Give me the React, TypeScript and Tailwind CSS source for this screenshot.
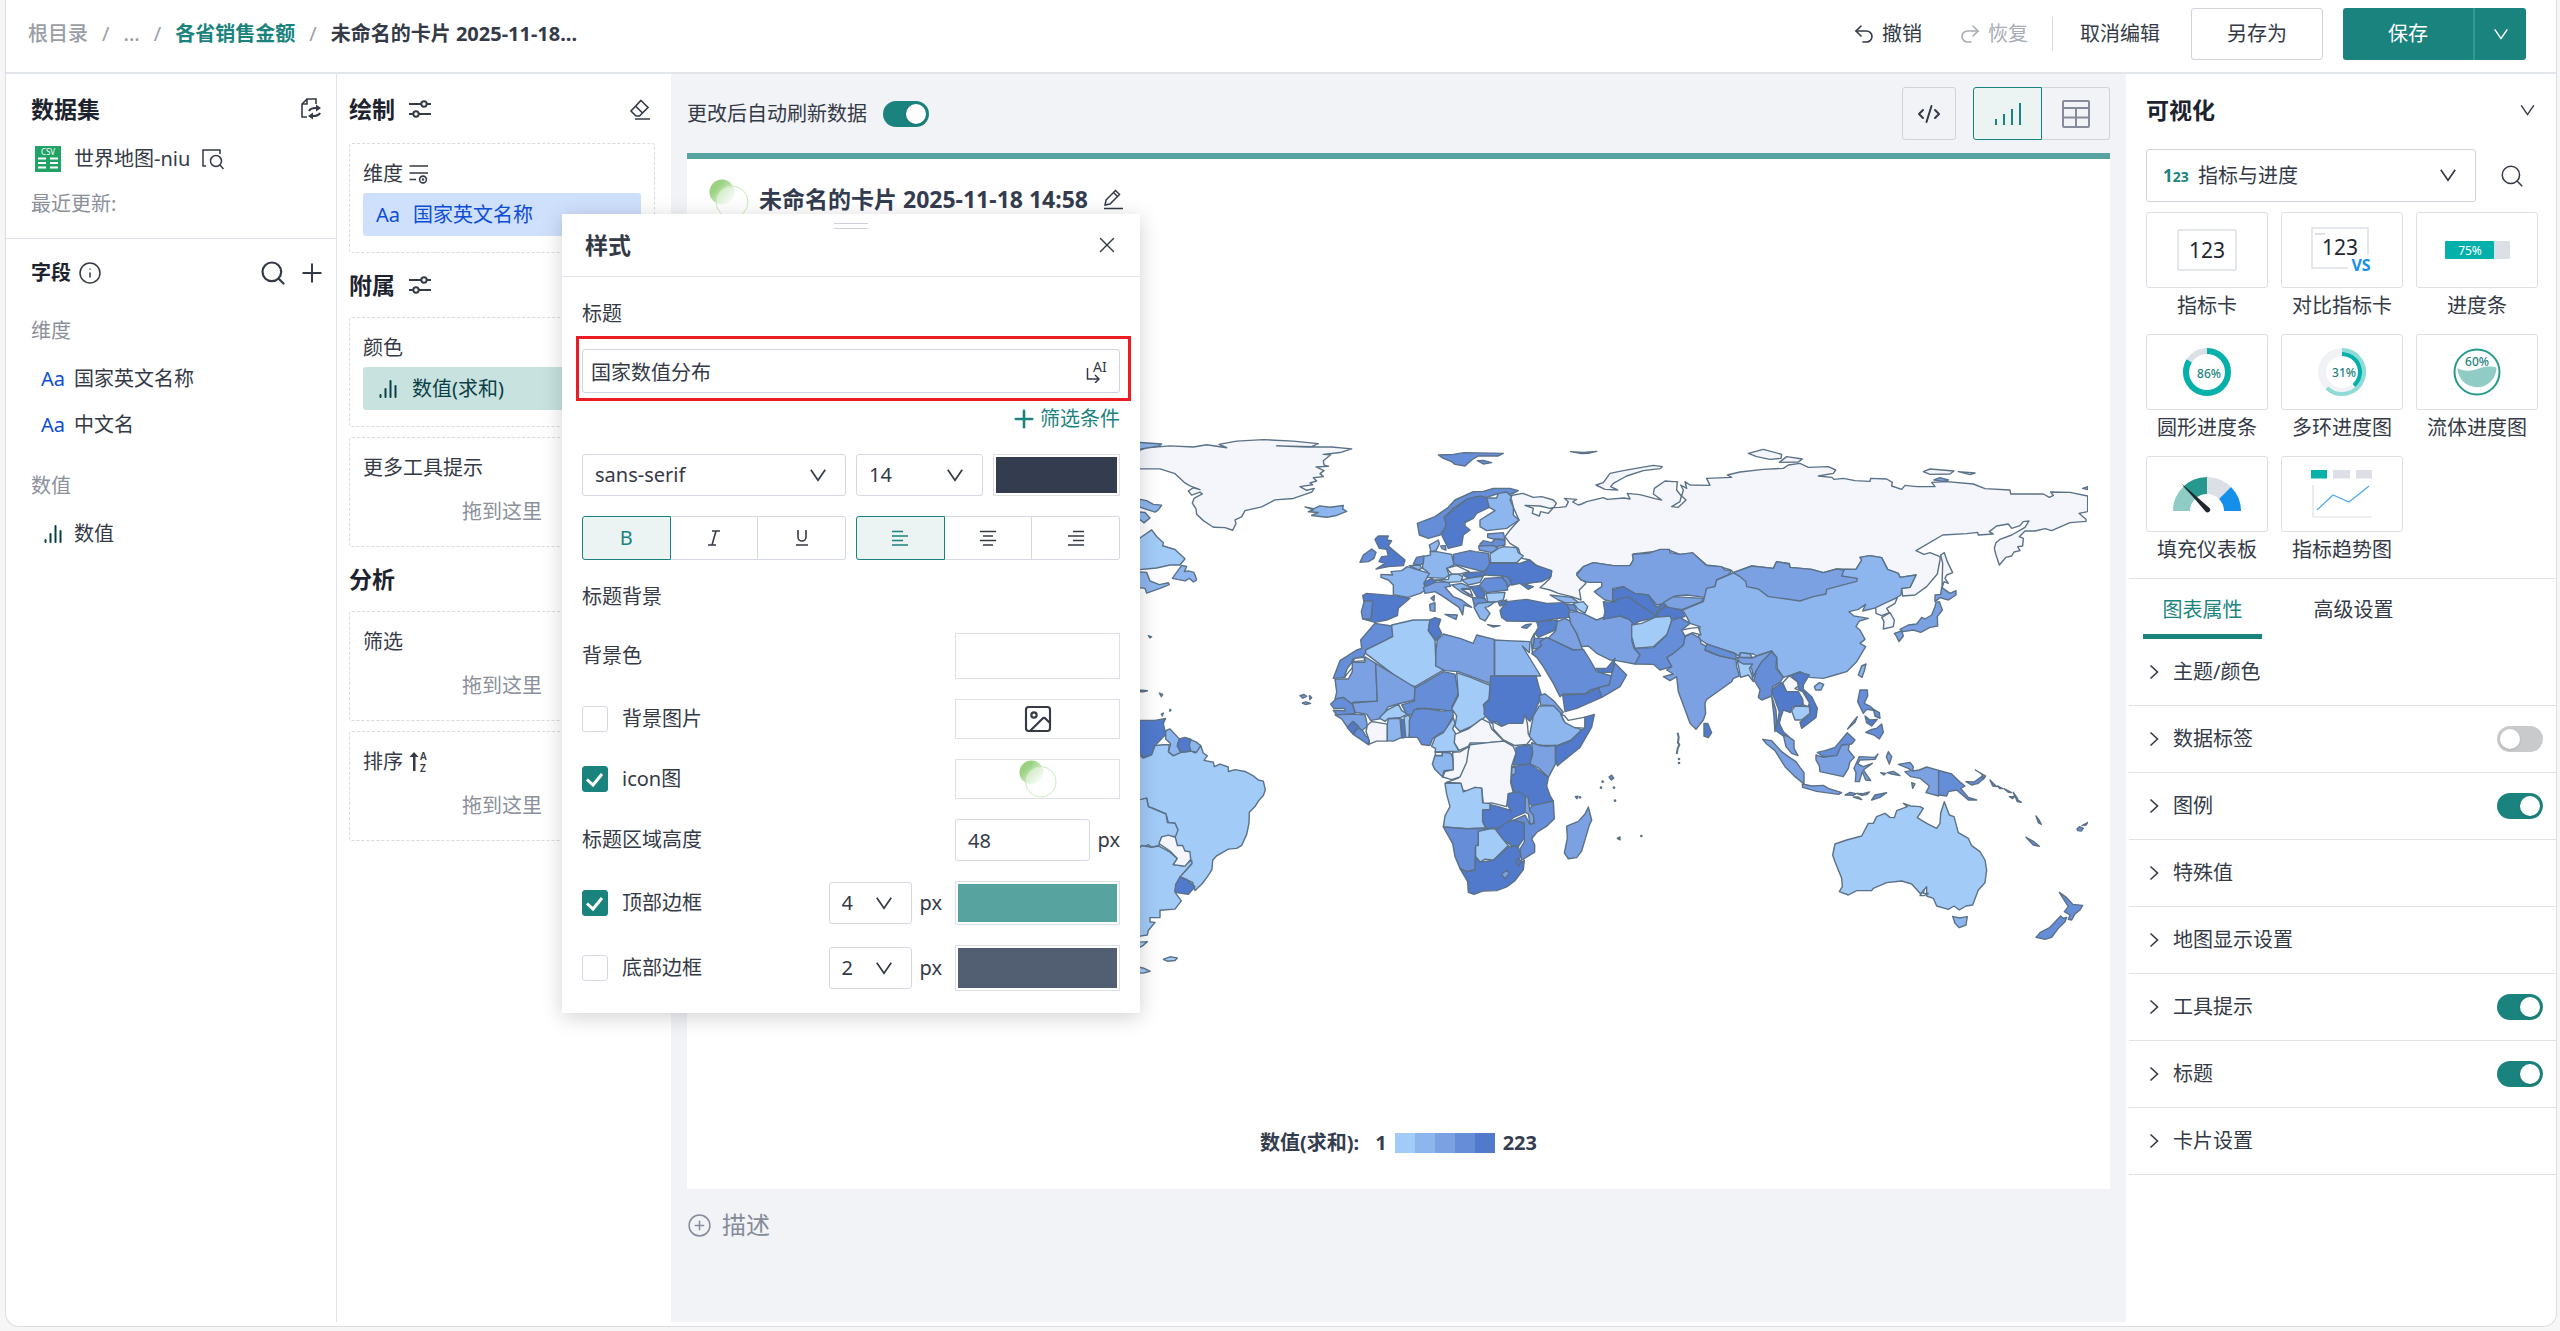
import React, { useState } from 'react';
import { CirclePlus, CodeXml, Image, Info, Plus, Redo2, Search, Undo2, X } from 'lucide-react';

type Region = [string, string];

const C1 = '#a2cbf8';
const C2 = '#8eb6ee';
const C3 = '#7ba1e2';
const C4 = '#668dd8';
const C5 = '#517acd';
const NONE = '#f4f6fb';
const WHITE = '#ffffff';

const atlantic: Region[] = [
  [NONE, '50,85 80,75 150,70 220,73 260,67 320,75 297,66 350,57 430,53 520,57 595,64 575,72 470,70 560,73 635,73 695,78 660,88 610,93 632,94 610,110 612,122 625,125 588,127 612,137 600,145 610,153 580,156 590,165 570,170 578,175 540,180 560,190 583,185 575,195 520,212 465,216 425,235 375,245 365,262 345,270 348,280 338,298 315,291 280,290 250,272 230,255 228,240 217,225 222,212 247,200 240,195 215,203 205,192 220,183 240,188 210,178 195,170 165,145 120,132 50,132'],
  [C2, '50,60 125,65 118,70 50,80'],
  [C2, '555,235 580,240 600,232 630,236 670,231 668,240 680,247 650,258 620,263 575,258 595,250 565,248 580,243'],
  [C2, '50,213 80,218 100,228 125,230 115,243 105,249 50,233'],
  [C2, '50,248 75,250 90,265 80,272 72,278 50,262'],
  [C1, '50,325 95,297 110,315 130,332 128,340 165,350 195,375 180,392 150,392 110,400 50,405'],
  [C2, '50,410 80,412 90,435 118,445 145,440 148,445 120,455 80,468 75,455 50,452'],
  [C2, '157,428 185,393 200,396 193,410 205,408 222,412 230,432 220,438 208,428 195,435'],
  [C5, '50,812 105,812 137,807 130,820 137,850 105,880 95,905 70,912 50,890'],
  [C2, '137,840 150,835 178,862 172,880 182,900 160,908 145,897 152,875 137,862'],
  [C1, '50,900 70,914 95,905 105,880 130,878 148,878 145,897 160,908 185,898 215,895 225,900 242,880 250,900 262,908 252,920 280,925 283,937 300,930 325,938 325,950 345,945 375,950 400,962 415,973 430,976 436,1000 430,1015 415,1030 405,1045 388,1060 387,1090 380,1120 365,1150 350,1158 325,1160 290,1178 278,1190 276,1215 262,1235 245,1255 225,1272 218,1250 180,1235 215,1200 205,1170 190,1163 170,1150 165,1125 172,1105 165,1090 145,1088 138,1065 100,1050 85,1045 80,1022 50,1030'],
  [C5, '178,862 195,858 212,863 208,880 213,895 185,898 172,882'],
  [C2, '212,864 228,870 242,880 230,898 213,895 208,880'],
  [C1, '50,1028 80,1022 85,1045 138,1065 142,1088 165,1090 174,1108 167,1125 125,1127 117,1150 95,1155 85,1148 50,1165'],
  [C1, '50,1165 65,1150 95,1155 117,1152 150,1168 172,1185 160,1202 190,1206 215,1190 216,1198 180,1235 165,1270 168,1280 184,1300 165,1322 120,1325 120,1345 90,1345 90,1357 105,1358 85,1380 82,1392 60,1395 50,1410'],
  [NONE, '117,1145 125,1127 145,1122 166,1128 172,1150 188,1150 195,1165 210,1167 212,1188 195,1206 160,1202 172,1185 150,1165'],
  [C5, '180,1235 200,1242 225,1262 205,1282 165,1277 167,1255'],
  [C1, '50,1412 82,1410 70,1420 50,1430'],
  [C1, '130,1458 150,1451 172,1454 165,1461 142,1463'],
  [C1, '50,1478 72,1482 90,1490 70,1495 50,1494'],
  [C4, '50,729 82,732 70,735 50,735'],
  [C3, '118,738 128,742 124,748'],
  [C3, '124,795 130,792 127,800'],
  [C3, '85,583 95,586 90,589'],
  [C3, '150,782 153,785 149,787'],
  [C3, '540,745 552,742 560,747 549,752'],
  [C3, '568,745 575,750 570,756'],
  [C3, '547,765 558,762 572,766 556,769'],
];

const africa: Region[] = [
  [C3, '645,700 685,700 697,680 697,655 735,655 735,640 767,658 772,760 700,763 695,770 670,750 645,755 650,735'],
  [C3, '767,658 885,723 883,757 845,765 805,775 795,790 780,808 752,812 740,795 705,790 697,765 772,760'],
  [C4, '632,768 650,753 670,750 697,768 705,793 650,797 640,785 675,786 675,780 642,780'],
  [C3, '645,797 705,795 735,797 740,815 742,828 725,840 715,828 700,815 682,830 665,808'],
  [C5, '682,832 698,815 714,828 700,850'],
  [C4, '700,850 714,832 730,842 738,855 748,862 746,878 720,862'],
  [NONE, '748,867 738,842 742,825 755,815 775,818 802,822 802,868 770,868 748,876'],
  [C1, '778,805 800,785 835,768 845,785 862,795 840,805 805,807 795,815'],
  [C2, '802,822 805,808 840,806 845,858 820,868 802,867'],
  [C5, '843,808 855,812 856,858 846,860'],
  [C1, '852,803 866,797 874,812 867,858 857,858'],
  [C4, '885,725 970,680 1005,687 1015,740 995,775 1000,790 965,783 915,780 890,780 875,798 860,795 845,770 883,760'],
  [C4, '868,858 868,812 882,783 915,780 965,787 997,785 1000,800 975,840 955,850 937,862 930,880 905,877 892,858'],
  [C1, '1010,683 1055,697 1110,717 1107,755 1090,770 1098,800 1075,820 1020,842 1005,828 1010,800 995,780 1015,745'],
  [C5, '1112,692 1248,692 1258,725 1265,745 1253,770 1240,800 1230,815 1215,800 1213,820 1165,822 1145,828 1130,815 1115,820 1092,795 1095,765 1108,757'],
  [C1, '935,882 945,858 970,845 1000,805 1005,820 998,835 1010,852 1003,872 1017,895 945,897 947,888'],
  [NONE, '1005,850 1045,835 1085,808 1108,818 1115,835 1152,868 1105,872 1050,873 1045,882 1017,893 1003,872'],
  [NONE, '1118,815 1145,828 1165,820 1208,820 1215,795 1222,820 1225,850 1237,858 1220,877 1185,880 1150,865 1120,835'],
  [C3, '1258,745 1275,740 1300,758 1330,790 1322,796 1300,772 1262,770'],
  [C2, '1240,800 1258,773 1300,772 1325,795 1330,812 1385,838 1355,865 1310,880 1270,880 1250,878 1228,855'],
  [WHITE, '1322,795 1334,800 1345,812 1395,803 1395,833 1365,832 1335,818'],
  [C5, '1395,803 1423,796 1415,830 1380,885 1325,925 1312,935 1306,915 1308,882 1350,868 1385,838 1395,833'],
  [C3, '1235,872 1260,880 1280,882 1306,880 1306,930 1285,966 1255,940 1228,928 1238,905'],
  [C5, '1188,885 1230,877 1238,895 1230,930 1180,933 1188,905'],
  [C5, '1178,937 1230,930 1285,966 1280,990 1290,1015 1300,1030 1235,1043 1210,1018 1180,1003 1172,970'],
  [C2, '1175,940 1186,938 1186,955 1175,962'],
  [NONE, '1050,878 1105,872 1152,868 1180,882 1188,900 1175,935 1172,980 1180,1008 1165,1010 1160,1045 1115,1035 1090,1038 1085,995 1065,993 1045,1005 1028,1000 1020,982 978,980 1015,968 1035,920'],
  [NONE, '998,898 1020,897 1047,882 1040,925 1020,965 995,972 968,965 975,950 1000,945'],
  [WHITE, '946,898 967,898 967,907 946,907'],
  [C2, '937,930 945,907 967,908 967,898 992,900 998,912 1000,945 972,948 968,965 945,945'],
  [C1, '975,982 1023,982 1030,1005 1065,993 1085,995 1088,1035 1110,1037 1110,1053 1088,1054 1088,1085 1097,1103 1040,1105 970,1100 975,1070 990,1045 980,1012'],
  [C5, '1088,1055 1110,1053 1112,1040 1135,1045 1165,1053 1175,1060 1162,1040 1165,1010 1200,1005 1220,1020 1222,1058 1180,1075 1140,1105 1100,1105 1088,1085'],
  [C3, '1216,1018 1225,1020 1228,1050 1243,1070 1240,1092 1230,1092 1225,1065 1215,1060'],
  [C4, '1235,1043 1300,1030 1303,1078 1280,1098 1250,1115 1235,1132 1244,1148 1244,1168 1205,1190 1200,1160 1213,1140 1213,1090 1180,1082 1215,1068 1230,1093 1243,1090 1240,1068 1228,1055'],
  [C5, '1128,1108 1160,1088 1180,1082 1213,1090 1212,1130 1195,1153 1175,1150 1150,1135'],
  [C4, '970,1100 1040,1105 1140,1103 1075,1112 1075,1150 1066,1155 1065,1215 1040,1221 1020,1212 1005,1180 998,1145'],
  [C1, '1075,1112 1110,1105 1125,1105 1148,1132 1165,1150 1120,1190 1095,1187 1080,1195 1067,1180 1067,1150 1075,1150'],
  [C5, '1020,1213 1040,1221 1065,1217 1067,1182 1080,1195 1120,1190 1168,1152 1195,1153 1202,1182 1190,1190 1195,1203 1213,1190 1210,1215 1185,1245 1160,1262 1130,1272 1090,1273 1062,1282 1045,1277 1043,1248'],
  [C3, '1145,1228 1160,1217 1168,1225 1155,1240'],
  [C5, '1187,1195 1195,1185 1204,1193 1196,1205'],
  [C3, '1405,1046 1415,1082 1408,1095 1385,1165 1370,1183 1345,1186 1333,1170 1342,1130 1340,1098 1375,1085 1395,1065'],
  [C4, '1467,965 1475,960 1481,968 1474,973'],
  [C4, '1366,1018 1374,1017 1371,1024'],
  [C4, '1492,1131 1500,1127 1500,1135'],
];

const eurasia: Region[] = [
  [NONE, '565,228 608,220 640,232 665,230 700,240 709,250 702,262 690,265 660,258 615,256 640,265 637,280 658,288 662,275 685,280 700,263 718,262 738,260 745,245 733,235 770,238 758,246 775,255 785,252 800,245 850,233 862,238 912,234 930,237 922,220 960,224 1005,236 1025,240 1000,222 1003,205 1035,183 1060,185 1072,185 1070,210 1084,228 1080,245 1055,260 1075,262 1098,240 1085,228 1090,210 1082,195 1100,205 1095,185 1110,195 1170,196 1160,175 1235,172 1222,165 1260,156 1330,148 1390,145 1405,135 1440,130 1465,142 1525,140 1547,150 1540,160 1495,168 1535,172 1542,178 1570,175 1605,182 1650,184 1652,175 1700,177 1717,187 1715,198 1745,208 1755,196 1790,200 1845,200 1835,187 1880,185 1960,192 1995,206 2070,210 2072,222 2170,222 2188,232 2200,226 2192,216 2250,217 2303,228 2303,275 2277,280 2298,298 2298,304 2250,308 2195,332 2175,326 2145,333 2115,333 2098,350 2110,355 2108,378 2093,380 2100,392 2082,396 2075,408 2058,412 2038,435 2028,405 2023,385 2028,368 2040,358 2075,345 2115,322 2127,303 2110,305 2100,317 2075,325 2065,312 2030,318 2008,335 2020,342 1975,345 1973,337 1940,341 1868,345 1788,392 1812,403 1830,398 1860,410 1860,420 1852,462 1820,500 1785,525 1748,528 1745,505 1770,502 1788,465 1740,472 1735,460 1703,448 1685,413 1650,407 1620,412 1625,420 1608,448 1550,447 1510,458 1475,448 1410,442 1408,430 1370,425 1360,445 1295,438 1240,458 1232,450 1200,440 1160,435 1118,400 1080,403 1045,390 940,402 940,420 930,437 880,437 820,428 790,440 770,460 785,475 798,490 778,510 783,540 755,530 715,520 690,510 660,503 675,490 690,475 695,455 660,445 630,420 605,415 600,400 595,385 570,370 555,350 570,330 597,300 580,262 575,240'],
  [NONE, '828,195 850,188 870,160 910,152 1000,136 1027,140 1020,146 970,152 920,168 880,190 872,200 893,210 855,208'],
  [C4, '752,95 790,97 830,94 805,100 785,101'],
  [C4, '355,105 400,103 432,98 550,100 535,108 475,108 455,120 435,138 405,133 395,125 370,115'],
  [C4, '472,122 490,121 515,128 490,132'],
  [NONE, '1285,100 1330,88 1385,103 1383,115 1350,118 1310,110'],
  [NONE, '1378,127 1400,110 1447,117 1435,126'],
  [NONE, '1810,155 1830,147 1902,153 1890,162 1830,163'],
  [NONE, '1915,155 1965,159 1950,164'],
  [C3, '1842,180 1860,173 1885,180 1870,184'],
  [C3, '2288,205 2303,200 2303,209'],
  [NONE, '1862,405 1873,398 1882,425 1898,458 1880,465 1875,475 1885,490 1872,485 1866,505 1868,430'],
  [C3, '790,440 820,428 880,437 930,437 940,420 937,403 985,400 1020,388 1048,388 1050,398 1080,403 1118,398 1160,437 1205,440 1215,450 1235,452 1225,465 1190,480 1185,500 1160,505 1155,532 1100,525 1065,528 1045,548 1010,555 985,525 940,520 910,500 878,505 878,545 855,540 835,525 823,515 845,500 845,487 805,487 783,480 770,465'],
  [C2, '1240,458 1225,465 1190,480 1185,500 1160,505 1150,545 1088,570 1100,590 1110,610 1140,620 1135,655 1165,675 1240,698 1255,708 1262,698 1300,702 1310,708 1355,693 1370,712 1372,745 1390,772 1415,765 1440,755 1470,772 1510,775 1545,765 1580,755 1610,725 1637,680 1620,670 1635,658 1620,630 1608,620 1618,603 1645,595 1615,590 1602,588 1587,575 1615,568 1637,553 1628,573 1670,563 1710,545 1743,525 1745,505 1770,502 1788,465 1740,472 1735,460 1703,448 1685,413 1650,407 1620,412 1625,420 1608,448 1575,448 1500,480 1400,500 1300,480'],
  [C3, '1240,458 1295,438 1360,445 1370,425 1408,432 1410,442 1475,448 1510,458 1550,447 1572,450 1565,468 1612,475 1610,484 1550,500 1520,508 1518,522 1480,530 1440,543 1400,537 1345,530 1315,507 1280,500 1278,485 1260,470'],
  [C3, '1095,650 1115,640 1140,655 1143,670 1160,680 1155,690 1190,705 1248,718 1250,740 1258,768 1240,775 1235,785 1200,810 1160,838 1155,850 1157,880 1150,900 1128,928 1110,910 1090,855 1075,815 1070,770 1050,782 1030,770 1060,762 1040,750 1055,740 1040,712 1060,700 1090,675'],
  [C5, '1152,910 1163,910 1175,938 1165,953 1152,948'],
  [C4, '1160,672 1200,685 1248,702 1248,718 1200,708 1155,690'],
  [C2, '1258,712 1262,698 1290,702 1297,712'],
  [C3, '1250,712 1297,714 1310,708 1355,693 1358,705 1325,730 1310,750 1300,770 1295,745 1262,732'],
  [C1, '1252,722 1270,732 1298,732 1288,745 1296,765 1300,785 1285,765 1262,772'],
  [C4, '1310,750 1325,725 1355,695 1370,712 1368,745 1390,772 1380,787 1358,800 1355,828 1325,840 1315,832 1320,810 1302,780'],
  [C4, '1355,828 1368,870 1370,905 1365,935 1362,890'],
  [C4, '292,310 345,290 385,262 405,240 460,215 490,214 520,205 570,205 595,212 575,222 530,222 500,232 470,230 440,238 400,265 375,290 378,320 360,345 325,355 298,345'],
  [C5, '470,230 485,228 507,240 508,262 470,280 460,295 435,308 435,318 450,330 430,345 425,375 385,385 365,345 375,325 378,310 372,292 400,270 440,238'],
  [C2, '500,234 530,234 535,220 560,216 575,230 570,240 580,262 580,285 597,300 560,325 500,332 480,320 480,300 525,272 508,262'],
  [C2, '328,375 355,360 358,372 348,392 333,395'],
  [C3, '362,378 376,377 378,390 366,386'],
  [C3, '503,342 550,338 555,358 520,357 503,352'],
  [C4, '480,372 490,362 515,368 525,357 555,360 555,375 530,380 480,378'],
  [C3, '476,378 520,376 535,385 515,398 478,390'],
  [C1, '510,402 535,385 550,380 590,383 595,398 610,408 590,428 512,428'],
  [C4, '400,403 450,392 465,395 505,400 510,440 490,455 400,432'],
  [C2, '308,410 332,405 330,395 350,395 395,403 402,435 380,445 387,465 375,475 320,472 322,455 308,445'],
  [C4, '280,432 290,412 312,408 310,430 300,435'],
  [C2, '268,437 300,435 305,445 295,450'],
  [C2, '183,463 218,465 213,455 245,452 262,440 328,460 318,478 312,492 318,510 300,520 265,532 220,524 220,495 205,480 183,472'],
  [C5, '312,487 335,475 348,485 335,495 315,497'],
  [C3, '310,502 345,487 385,485 392,498 375,502 400,530 425,540 455,562 432,555 428,585 417,562 370,530 345,515 315,520'],
  [C1, '345,480 385,478 388,465 410,460 428,470 422,485 385,487'],
  [NONE, '380,445 410,437 448,455 420,462 395,462'],
  [C5, '428,465 445,458 490,455 497,465 445,475'],
  [C2, '425,480 445,475 490,468 480,487 445,495'],
  [C5, '510,430 560,430 600,430 628,420 645,435 695,452 693,470 665,485 640,488 612,492 640,500 625,508 600,490 575,495 570,475 545,468 497,465 495,455'],
  [C4, '545,468 562,470 575,490 565,500'],
  [C4, '478,497 495,475 545,472 560,488 563,510 500,518'],
  [C1, '498,520 555,517 550,540 520,548 503,545'],
  [C5, '452,500 475,497 495,520 492,535 470,530'],
  [C2, '395,495 425,490 460,505 425,505 455,532 430,520'],
  [NONE, '425,508 450,508 458,528'],
  [C4, '457,532 495,535 500,548 475,552 465,565'],
  [C2, '462,562 475,550 525,545 505,560 495,562 510,580 495,603 480,595'],
  [C4, '503,614 520,617 540,617 520,621'],
  [C4, '605,622 618,614 634,612 620,625'],
  [C3, '375,583 412,585 408,598'],
  [C3, '329,553 345,548 345,574 331,572'],
  [C3, '333,535 343,527 342,543'],
  [C5, '128,527 140,520 220,527 270,535 235,565 232,587 200,600 165,607 130,597 155,590 157,545 132,545'],
  [C4, '133,543 158,543 153,597 128,597 124,575'],
  [C5, '165,358 175,348 205,348 200,360 215,362 205,378 225,395 255,420 250,437 205,440 168,447 195,430 177,425 185,410 205,408 200,388 178,385'],
  [C4, '120,427 130,405 155,387 168,397 162,415 145,425'],
  [C5, '540,572 560,545 620,538 680,550 735,548 750,570 745,592 700,597 655,605 560,603 545,592'],
  [C5, '535,548 560,540 560,550 540,558'],
  [C2, '690,525 755,532 775,547 735,548 715,540'],
  [C1, '760,550 790,545 803,560 795,580 775,568'],
  [C4, '740,552 762,555 772,575 750,570'],
  [C5, '650,605 712,600 705,630 655,652 645,640 655,622'],
  [C3, '712,605 735,595 752,605 770,640 788,690 760,690 685,655 707,632'],
  [C4, '643,655 680,655 665,665 670,673 650,687 637,685'],
  [C3, '633,660 643,640 643,655 637,695'],
  [C4, '635,700 665,677 660,665 680,652 760,690 790,688 810,720 830,755 875,768 868,795 810,810 795,822 730,822 720,830 700,790 670,740 650,712'],
  [C3, '745,577 770,575 795,583 830,600 855,590 900,588 935,600 940,630 935,660 942,685 960,705 945,732 890,722 870,720 830,700 805,678 785,680 770,640 752,610'],
  [C5, '828,745 860,745 885,715 878,757 838,757'],
  [C4, '885,730 920,765 900,800 845,832 835,803 868,795 875,762'],
  [C5, '728,825 795,822 835,803 845,832 770,865 735,875'],
  [C5, '850,545 880,548 900,532 925,530 960,555 1015,590 955,605 945,615 925,597 900,588 850,598 855,575'],
  [C5, '878,510 910,500 945,520 985,525 1010,562 1035,548 1035,560 1012,572 1015,592 960,555 925,530 900,535 880,545'],
  [C3, '1030,548 1060,530 1150,535 1145,545 1088,568 1050,568'],
  [C5, '1010,580 1035,560 1085,570 1095,590 1060,597 1015,590'],
  [C1, '935,615 965,610 1005,592 1050,588 1055,600 1045,640 1000,680 945,685 935,650'],
  [C4, '945,685 1000,683 1040,645 1055,602 1080,592 1110,610 1085,630 1095,650 1090,675 1060,700 1040,712 1055,740 1020,750 1000,733 945,732 960,705'],
  [WHITE, '1085,630 1110,625 1135,622 1143,645 1118,638 1095,648'],
  [C4, '165,610 215,618 220,648 185,668 140,690 130,710 100,715 75,772 40,775 60,722 110,690 125,685 122,660'],
  [WHITE, '72,773 82,745 100,722 105,715 133,712 133,722 98,725 98,742'],
  [C1, '215,615 280,600 330,600 325,632 345,660 348,735 370,750 285,800 255,790 137,700 137,690 218,650'],
  [C5, '330,600 345,593 362,598 355,620 365,640 348,662 325,632'],
  [C3, '352,660 370,642 420,655 460,670 470,645 523,658 523,790 510,790 415,755 375,752 347,738 348,690'],
  [C2, '524,660 560,662 630,665 628,698 607,678 662,768 524,768'],
];

const pacific: Region[] = [
  [C5, '160,85 185,68 200,95 235,93 248,115 248,135 215,142 212,158 190,150 183,170 178,190 190,215 207,230 190,228 165,210 172,190 178,155 165,120 155,95'],
  [C5, '215,45 240,37 268,45 250,75 250,88 275,110 292,145 288,172 245,205 240,187 270,165 270,140 255,100 235,85 235,70 225,60'],
  [NONE, '188,68 208,47 232,65 235,78 225,86 248,95 268,128 265,140 250,135 248,118 235,95 200,95'],
  [C1, '215,152 225,138 268,140 270,160 245,180 225,180'],
  [C3, '190,225 205,230 222,242 222,265 234,287 215,280 198,260'],
  [C3, '128,238 155,242 185,275 205,290 228,305 240,322 252,338 252,372 225,350 195,320 165,272 140,252'],
  [C3, '247,372 275,378 310,376 325,385 365,398 355,403 290,394 248,382'],
  [C3, '288,285 310,292 350,285 358,255 388,252 385,270 403,292 390,305 385,325 370,350 300,335 298,318 288,300'],
  [C4, '292,277 315,272 345,262 382,218 405,240 395,252 365,255 350,287 310,290'],
  [C3, '418,290 465,292 474,282 465,298 420,300 413,312 430,320 457,310 430,330 452,362 437,360 427,335 418,365 406,365 408,338 402,325'],
  [C3, '505,275 515,290 508,312 499,290'],
  [C3, '482,338 498,340 492,345'],
  [C3, '502,338 520,334 540,347 515,342'],
  [C3, '575,368 585,372 578,385'],
  [C4, '455,420 465,405 500,398 480,412'],
  [C4, '375,405 390,397 408,401 400,406'],
  [C4, '410,400 430,401 448,396 440,404 425,406'],
  [C4, '400,411 415,411 425,419'],
  [C3, '535,313 570,307 580,320 578,333 598,330 620,321 656,331 656,408 618,398 628,378 600,355 572,350 555,335 575,332 565,325'],
  [C4, '656,331 695,342 722,368 735,378 722,385 745,412 770,420 745,420 710,390 685,395 680,408 656,405'],
  [C4, '738,365 762,366 785,350 792,355 775,370 755,375'],
  [C4, '766,330 797,348 790,357 785,342'],
  [C4, '810,360 830,380 818,378'],
  [C4, '832,378 848,386 840,386'],
  [C4, '852,386 875,398 865,397'],
  [C4, '880,397 893,416 885,412'],
  [C4, '868,410 882,410 878,416'],
  [C4, '888,416 904,427 892,425'],
  [C4, '948,468 956,478 964,493 955,488'],
  [C4, '918,532 940,544 958,559 940,555'],
  [C4, '1071,507 1078,500 1090,505 1084,513 1073,512'],
  [C4, '1086,497 1104,487 1098,495'],
  [C1, '345,552 380,540 425,528 445,490 460,490 470,470 495,460 510,472 523,473 530,452 562,440 550,430 572,438 600,440 610,445 592,473 620,490 650,505 660,490 662,460 673,425 688,465 702,470 715,518 745,535 755,557 780,575 795,600 800,630 795,668 775,690 758,735 738,738 718,750 702,738 685,748 650,738 640,715 620,708 620,680 602,702 575,672 545,663 500,668 460,685 455,692 410,692 385,705 358,695 367,680 365,655 345,605 338,585'],
  [WHITE, '600,707 612,690 610,700 625,700 612,707'],
  [C2, '698,769 718,774 742,770 738,795 718,803 705,790'],
  [C4, '1018,697 1040,713 1058,733 1088,736 1080,750 1065,762 1055,780 1045,778 1050,765 1033,755 1045,740'],
  [C4, '1022,768 1030,775 1040,772 1035,785 1015,805 995,832 975,838 948,832 960,818 990,802'],
  [C4, '420,90 442,90 443,108 433,130 452,140 465,152 440,148 430,160 420,140 413,125'],
  [C4, '460,148 478,158 480,175 465,168'],
  [C5, '435,168 450,180 472,178 455,198 440,188'],
  [C4, '437,217 455,208 470,205 485,192 490,217 478,237 462,225'],
  [C4, '412,170 405,187 383,207 395,190'],
  [C2, '415,45 425,18 438,12 433,32 426,52'],
  [C2, '283,80 298,68 311,73 303,90 287,90'],
];

const japan: Region[] = [
  [C3, '725,472 750,490 768,482 768,495 745,510 720,503 705,515 705,495 722,493'],
  [C3, '708,517 718,515 727,540 712,560 713,588 690,592 662,607 640,600 610,605 600,598 625,585 650,582 665,562 675,567 695,555 705,530'],
  [C3, '583,610 605,603 610,618 597,635 590,620'],
  [NONE, '527,533 560,517 592,503 585,520 560,535 568,548 545,557 528,550'],
  [NONE, '545,562 570,548 583,570 580,590 550,597 552,575'],
];

const islets = ['848,305', '843,323', '882,323', '885,362', '896,475', '964,468', '780,352', '1077,237', '1077,249'];

function Regions({ list }: { list: Region[] }) {
  return (
    <>
      {list.map(([fill, points], i) => (
        <polygon key={i} points={points} fill={fill} vectorEffect="non-scaling-stroke" />
      ))}
    </>
  );
}

function WorldMap() {
  return (
    <svg viewBox="709 400 1379 620" className="block w-full" stroke="#5b7188" strokeWidth="1.4" strokeLinejoin="round">
      <g transform="translate(1120 420) scale(0.33333 0.36995)">
        <Regions list={atlantic} />
      </g>
      <g transform="translate(1320 420) scale(0.33333)">
        <Regions list={eurasia} />
      </g>
      <g transform="translate(1120 420) scale(0.33333 0.36995)">
        <Regions list={africa} />
      </g>
      <g transform="translate(1720 660) scale(0.33333)">
        <Regions list={pacific} />
      </g>
      <g transform="translate(1700 430) scale(0.33333)">
        <Regions list={japan} />
      </g>
      <g transform="translate(1320 680) scale(0.33333)" fill="#5b7188" stroke="none">
        {islets.map((p) => {
          const [cx, cy] = p.split(',');
          return <circle key={p} cx={cx} cy={cy} r="4" />;
        })}
        <path d="M1073 158l3 14-2 16 4 6-5 12-3 16" fill="none" stroke="#5b7188" strokeWidth="6" />
      </g>
    </svg>
  );
}

function Chevron({ className = '' }: { className?: string }) {
  return (
    <svg viewBox="0 0 16 16" className={`w-4 h-4 ${className}`} fill="none" stroke="currentColor" strokeWidth="1.7">
      <path d="M0.800 2.800L8 13.200l7.200-10.400" />
    </svg>
  );
}

function SlidersIcon() {
  return (
    <svg viewBox="0 0 22 20" className="w-[22px] h-5" fill="none" stroke="currentColor" strokeWidth="2">
      <path d="M0 5h12M18 5h4M0 15h4M10 15h12" />
      <circle cx="15" cy="5" r="2.7" />
      <circle cx="7" cy="15" r="2.7" />
    </svg>
  );
}

function BarsIcon() {
  return (
    <svg viewBox="0 0 18 20" className="w-[18px] h-5" stroke="currentColor" strokeWidth="2" strokeLinecap="round">
      <path d="M1.5 16v2M6.5 10v8M11.5 2v16M16.5 7v11" />
    </svg>
  );
}

function BubblesIcon({ className, id }: { className: string; id: string }) {
  return (
    <svg viewBox="0 0 40 40" className={className}>
      <defs>
        <linearGradient id={id} x1="0" y1="0" x2="1" y2="1">
          <stop offset="0.3" stopColor="#9ad282" />
          <stop offset="0.9" stopColor="#f4fbf1" />
        </linearGradient>
      </defs>
      <circle cx="13" cy="13" r="12.500" fill={`url(#${id})`} />
      <circle cx="23" cy="23" r="16" fill="#ffffff" fillOpacity="0.45" stroke="#c9e9bd" strokeWidth="1" />
    </svg>
  );
}

function SearchFileIcon() {
  return (
    <svg viewBox="0 0 22 22" className="w-[22px] h-[22px]" fill="none" stroke="currentColor" strokeWidth="1.5">
      <path d="M4 18H1V2H18V6" />
      <circle cx="14" cy="13" r="5.5" />
      <path d="M18 17l3.5 4" />
    </svg>
  );
}

function SwapFileIcon() {
  return (
    <svg viewBox="0 0 20 22" className="w-5 h-[22px]" fill="none" stroke="currentColor" strokeWidth="1.6">
      <path d="M6 19H1V6L6 1h9v5M1 6h5V1" />
      <path d="M8 13c1-2 3-3 7-3M19 15c-1 2-3 3-7 3" strokeWidth="2.2" />
      <path d="M15 6.5l5 3.5-5 3.5zM12 14.500l-5 3.500 5 3.500z" fill="currentColor" stroke="none" />
    </svg>
  );
}

function Toggle({ label, on }: { label: string; on: boolean }) {
  const [checked, setChecked] = useState(on);
  return (
    <input
      type="checkbox"
      role="switch"
      aria-label={label}
      checked={checked}
      onChange={(e) => setChecked(e.target.checked)}
      className="appearance-none relative w-[46px] h-[26px] rounded-full bg-[#c8cacc] checked:bg-[#1b837d] before:absolute before:content-[''] before:top-[3px] before:left-[3px] before:w-5 before:h-5 before:rounded-full before:bg-white before:shadow checked:before:left-[23px]"
    />
  );
}

function CheckRow({ id, label, on }: { id: string; label: string; on: boolean }) {
  const [checked, setChecked] = useState(on);
  return (
    <div className="flex items-center flex-1">
      <span className="grid mr-[14px]">
        <input
          id={id}
          type="checkbox"
          checked={checked}
          onChange={(e) => setChecked(e.target.checked)}
          className="col-start-1 row-start-1 appearance-none w-[26px] h-[26px] rounded-[3px] border border-[#d5d9e1] bg-white checked:bg-[#1b837d] checked:border-[#1b837d]"
        />
        {checked && (
          <svg viewBox="0 0 26 26" className="col-start-1 row-start-1 w-[26px] h-[26px] pointer-events-none" fill="none" stroke="#fff" strokeWidth="3">
            <path d="M5 13.500l6 5.500L20 8" />
          </svg>
        )}
      </span>
      <label htmlFor={id}>{label}</label>
    </div>
  );
}

interface SelectBoxProps {
  label: string;
  options: string[];
  className: string;
}

const SelectBox: React.FC<SelectBoxProps> = ({ label, options, className }) => (
  <div className={`relative ${className}`}>
    <select aria-label={label} className="appearance-none w-full h-full px-3 border border-[#d5d9e1] rounded-[3px] bg-white">
      {options.map((o) => (
        <option key={o}>{o}</option>
      ))}
    </select>
    <Chevron className="absolute top-1/2 right-5 -translate-y-1/2 pointer-events-none" />
  </div>
);

function ColorBox({ label, color, className }: { label: string; color: string; className: string }) {
  return (
    <input
      type="color"
      aria-label={label}
      defaultValue={color}
      className={`appearance-none border border-[#dde0e7] bg-white p-[2px] [&::-webkit-color-swatch-wrapper]:p-0 [&::-webkit-color-swatch]:border-none ${className}`}
    />
  );
}

function Header() {
  return (
    <header className="flex items-center h-[68px] pl-[22px] pr-[30px] box-content pb-1 border-b-2 border-[#e2e5ea]">
      <nav className="flex flex-1 items-center gap-[14px] font-bold text-[#9a9ea6]">
        <a href="#root" className="font-medium">根目录</a>
        <span className="font-normal">/</span>
        <span className="font-medium">...</span>
        <span className="font-normal">/</span>
        <a href="#folder" className="text-[#1b837d]">各省销售金额</a>
        <span className="font-normal">/</span>
        <span className="text-[#343a46]">未命名的卡片 2025-11-18...</span>
      </nav>
      <button className="flex items-center gap-[6px]">
        <Undo2 size={24} strokeWidth={1.6} />
        撤销
      </button>
      <button className="flex items-center gap-[6px] ml-9 text-[#a8acb4]" disabled>
        <Redo2 size={24} strokeWidth={1.6} />
        恢复
      </button>
      <span className="w-px h-[34px] bg-[#d8dbe1] ml-6" />
      <button className="ml-[27px]">取消编辑</button>
      <button className="ml-[31px] w-[132px] h-[52px] border border-[#d0d3da] rounded-[3px]">另存为</button>
      <div className="flex ml-5 h-[52px] text-white">
        <button className="w-[130px] bg-[#1b837d] rounded-l-[3px]">保存</button>
        <button aria-label="更多保存选项" className="w-[53px] flex items-center justify-center bg-[#1b837d] border-l-2 border-[#379892] rounded-r-[3px]">
          <Chevron className="!w-[14px]" />
        </button>
      </div>
    </header>
  );
}

function FieldRow({ name, numeric = false }: { name: string; numeric?: boolean }) {
  return (
    <div className="flex items-center h-[46px] pl-[10px]">
      <span className="w-[33px]">{numeric ? <span className="block pl-[3px] text-[#0c3f45]"><BarsIcon /></span> : <span className="text-[#0b4dd6]">Aa</span>}</span>
      {name}
    </div>
  );
}

function DatasetPanel() {
  return (
    <aside className="w-[331px] shrink-0 border-r border-[#dfe2e9]">
      <section className="pl-[25px] pt-4 pr-[15px] h-[165px] border-b border-[#dfe2e9]">
        <div className="flex items-center justify-between h-[38px]">
          <h2 className="text-[23px] font-bold text-[#1d232e]">数据集</h2>
          <button aria-label="替换数据集"><SwapFileIcon /></button>
        </div>
        <div className="flex items-center mt-3 h-[38px]">
          <svg viewBox="0 0 26 26" className="w-[26px] h-[26px] ml-1 mr-[13px]">
            <rect width="26" height="26" fill="#21a366" />
            <text x="13" y="8.500" fontSize="8" textAnchor="middle" fill="#fff">CSV</text>
            <path d="M3 12.500h8M15 12.500h8M3 17h8M15 17h8M3 21.500h8M15 21.500h8" stroke="#fff" strokeWidth="2.200" />
          </svg>
          <span className="mr-3">世界地图-niu</span>
          <SearchFileIcon />
        </div>
        <p className="mt-[11px] text-[#8b909a]">最近更新:</p>
      </section>
      <section className="pl-[25px] pr-[9px] pt-4">
        <div className="flex items-center h-9">
          <h3 className="font-bold text-[#1d232e] mr-[7px]">字段</h3>
          <Info size={24} strokeWidth={1.5} />
          <button aria-label="搜索字段" className="ml-auto mr-[10px]"><Search size={28} strokeWidth={1.9} /></button>
          <button aria-label="新增字段"><Plus size={30} strokeWidth={1.6} /></button>
        </div>
        <div className="flex items-center h-10 mt-5 mb-[5px] text-[#8b909a]">维度</div>
        <FieldRow name="国家英文名称" />
        <FieldRow name="中文名" />
        <div className="flex items-center h-10 mt-[18px] mb-[5px] text-[#8b909a]">数值</div>
        <FieldRow name="数值" numeric />
      </section>
    </aside>
  );
}

function DropZone({ label, icon, children }: { label: string; icon?: React.ReactNode; children?: React.ReactNode }) {
  return (
    <div className="h-[110px] mb-[10px] last:mb-0 px-[13px] pt-[15px] border border-dashed border-[#d9dbe0] rounded-[3px]">
      <div className="flex items-center gap-[6px] h-[30px] mb-1">
        {label}
        {icon}
      </div>
      {children ?? <div className="flex items-center justify-center h-[50px] text-[#8b909a]">拖到这里</div>}
    </div>
  );
}

function SectionTitle({ children, sliders = true }: { children: React.ReactNode; sliders?: boolean }) {
  return (
    <div className="flex items-center h-16 gap-[14px]">
      <h2 className="text-[23px] font-bold text-[#1d232e]">{children}</h2>
      {sliders && <SlidersIcon />}
    </div>
  );
}

function DrawPanel() {
  return (
    <aside className="w-[334px] shrink-0 pl-3 pr-4 pt-[3px]">
      <div className="flex items-center justify-between pb-[2px]">
        <SectionTitle>绘制</SectionTitle>
        <button aria-label="清空" className="pr-[5px]">
          <svg viewBox="0 0 21 21" className="w-[21px] h-[21px]" fill="none" stroke="currentColor" strokeWidth="1.6">
            <path d="M12 1.500l7 7-8.500 8.500H7L2 12zM6.500 7l7 7M6 20h15" />
          </svg>
        </button>
      </div>
      <div>
        <DropZone
          label="维度"
          icon={
            <svg viewBox="0 0 20 20" className="w-5 h-5" fill="none" stroke="currentColor" strokeWidth="1.6">
              <path d="M0.500 2h18.500M0.500 9h18.500M0.500 15.500h6.500" />
              <circle cx="14" cy="15.500" r="3.400" />
              <circle cx="14" cy="15.500" r="0.500" />
            </svg>
          }
        >
          <div className="flex items-center h-[43px] px-[13px] gap-[13px] rounded-[3px] bg-[#cfe0fd] text-[#0b4dd6]">
            <span>Aa</span>国家英文名称
          </div>
        </DropZone>
      </div>
      <SectionTitle>附属</SectionTitle>
      <div>
        <DropZone label="颜色">
          <div className="flex items-center h-[43px] px-4 gap-[15px] rounded-[3px] bg-[#c8e2e0] text-[#0c3f45]">
            <BarsIcon />数值(求和)
          </div>
        </DropZone>
        <DropZone label="更多工具提示" />
      </div>
      <SectionTitle sliders={false}>分析</SectionTitle>
      <div>
        <DropZone label="筛选" />
        <DropZone
          label="排序"
          icon={
            <svg viewBox="0 0 22 28" className="w-[22px] h-7" fill="currentColor">
              <path d="M4 23V9H0.500L5 4l4.500 5H6.500v14z" />
              <text x="11" y="12" fontSize="10" fontWeight="600">A</text>
              <text x="11" y="24" fontSize="10" fontWeight="600">Z</text>
            </svg>
          }
        />
      </div>
    </aside>
  );
}

function Canvas() {
  return (
    <main className="flex-1 min-w-0 px-4 bg-[#f2f3f7]">
      <div className="flex items-center h-[79px]">
        <span className="mr-4">更改后自动刷新数据</span>
        <Toggle label="更改后自动刷新数据" on />
        <button aria-label="代码" className="ml-auto mr-[17px] flex items-center justify-center w-[54px] h-[53px] border border-[#d0d3da] rounded-[3px]">
          <CodeXml size={24} strokeWidth={2} />
        </button>
        <button aria-label="图表" className="flex items-center justify-center w-[69px] h-[53px] border border-[#1b837d] rounded-l-[3px] bg-[#ecf3f3] text-[#1b837d]">
          <svg viewBox="0 0 28 24" className="w-7 h-6" stroke="currentColor" strokeWidth="2">
            <path d="M2 17v6M10 12v11M18 7v16M26 1v22" />
          </svg>
        </button>
        <button aria-label="表格" className="flex items-center justify-center w-[68px] h-[53px] border border-l-0 border-[#d0d3da] rounded-r-[3px] text-[#858b99]">
          <svg viewBox="0 0 28 28" className="w-7 h-7" fill="none" stroke="currentColor" strokeWidth="2">
            <rect x="1" y="1" width="26" height="26" rx="1" />
            <path d="M1 8h26M1 17.500h26M14 8v19" />
          </svg>
        </button>
      </div>
      <section className="h-[1036px] border-t-[6px] border-[#57a39f] bg-white px-[22px]">
        <div className="flex items-center h-[80px]">
          <BubblesIcon id="titleBubbles" className="w-10 h-10 mr-[10px]" />
          <h1 className="text-[23px] font-bold text-[#343c4f]">未命名的卡片 2025-11-18 14:58</h1>
          <button aria-label="编辑标题" className="ml-[14px]">
            <svg viewBox="0 0 22 22" className="w-[22px] h-[22px]" fill="none" stroke="currentColor" strokeWidth="1.500">
              <path d="M4 12L13.500 2.500l4 4L8 16l-5 1zM11.500 4.500l4 4M2 20.500h19" />
            </svg>
          </button>
        </div>
        <div className="pt-[161px]">
          <WorldMap />
        </div>
        <div className="flex items-center justify-center h-[30px] mt-[108px] font-bold text-[#343c4f]">
          <span className="mr-4">数值(求和):</span>
          <span>1</span>
          <span className="flex mx-2">
            <i className="w-5 h-5 bg-[#a2cbf8]" />
            <i className="w-5 h-5 bg-[#8eb6ee]" />
            <i className="w-5 h-5 bg-[#7ba1e2]" />
            <i className="w-5 h-5 bg-[#668dd8]" />
            <i className="w-5 h-5 bg-[#517acd]" />
          </span>
          <span>223</span>
        </div>
      </section>
      <button className="flex items-center gap-[10px] h-[72px] text-2xl text-[#858b99]">
        <CirclePlus size={25} strokeWidth={1.4} />
        描述
      </button>
    </main>
  );
}

const tiles: { name: string; icon: React.ReactNode }[] = [
  {
    name: '指标卡',
    icon: (
      <svg viewBox="0 0 60 42" className="w-[60px] h-[42px]">
        <rect x="1" y="1" width="58" height="40" rx="1" fill="#fff" stroke="#dcdfe6" strokeWidth="1.500" />
        <text x="30" y="29" fontSize="21" textAnchor="middle" fill="#22272f">123</text>
      </svg>
    ),
  },
  {
    name: '对比指标卡',
    icon: (
      <svg viewBox="0 0 64 54" className="w-16 h-[54px]">
        <path d="M58 32V5H2v40h36" fill="none" stroke="#dcdfe6" strokeWidth="1.500" />
        <path d="M5 11h10" stroke="#dcdfe6" strokeWidth="2" />
        <text x="30" y="32" fontSize="21" textAnchor="middle" fill="#22272f">123</text>
        <text x="51" y="48" fontSize="16" fontWeight="bold" textAnchor="middle" fill="#1590ea">VS</text>
      </svg>
    ),
  },
  {
    name: '进度条',
    icon: (
      <svg viewBox="0 0 65 18" className="w-[65px] h-[18px]">
        <rect width="65" height="18" rx="1" fill="#dcdfe6" />
        <rect width="49" height="18" rx="1" fill="#04b0aa" />
        <text x="25" y="13.500" fontSize="12" textAnchor="middle" fill="#fff">75%</text>
      </svg>
    ),
  },
  {
    name: '圆形进度条',
    icon: (
      <svg viewBox="0 0 48 48" className="w-12 h-12" fill="none" strokeWidth="6">
        <circle cx="24" cy="24" r="21" stroke="#dcdfe6" />
        <circle cx="24" cy="24" r="21" stroke="#04b0aa" strokeDasharray="110 132" transform="rotate(-90 24 24)" />
        <text x="26" y="30" fontSize="12" fontWeight="500" textAnchor="middle" fill="#1b837d">86%</text>
      </svg>
    ),
  },
  {
    name: '多环进度图',
    icon: (
      <svg viewBox="0 0 48 48" className="w-12 h-12" fill="none" strokeWidth="4">
        <circle cx="24" cy="24" r="20" stroke="#f1f2f6" strokeWidth="8" />
        <path d="M24 2a22 22 0 1 1 -15 38" stroke="#8edbd8" />
        <path d="M24 6a18 18 0 0 1 12 31.500" stroke="#04b0aa" />
        <text x="26" y="29" fontSize="12" fontWeight="500" textAnchor="middle" fill="#1b837d">31%</text>
      </svg>
    ),
  },
  {
    name: '流体进度图',
    icon: (
      <svg viewBox="0 0 48 48" className="w-12 h-12">
        <circle cx="24" cy="24" r="22.500" fill="#fff" stroke="#279a8e" strokeWidth="2" />
        <path d="M4.500 20c5 3 11 4 20 1c8-3 12-3 19-1.500A19.500 19.500 0 1 1 4.500 20z" fill="#90ccc5" />
        <text x="24" y="18" fontSize="12" fontWeight="500" textAnchor="middle" fill="#1b837d">60%</text>
      </svg>
    ),
  },
  {
    name: '填充仪表板',
    icon: (
      <svg viewBox="0 0 70 38" className="w-[70px] h-[38px]" fill="none" strokeWidth="17">
        <path d="M9.500 36A25.500 25.500 0 0 1 17 18" stroke="#90ccc5" />
        <path d="M17 18A25.500 25.500 0 0 1 35 10.500" stroke="#27988d" />
        <path d="M35 10.500A25.500 25.500 0 0 1 53 18" stroke="#dcdfe6" />
        <path d="M53 18A25.500 25.500 0 0 1 60.500 36" stroke="#1590ea" />
        <path d="M9 8L37.500 33a2.500 2.500 0 0 1-4 3.500z" fill="#22272f" stroke="none" />
      </svg>
    ),
  },
  {
    name: '指标趋势图',
    icon: (
      <svg viewBox="0 0 62 48" className="w-[62px] h-12" fill="none">
        <rect width="16" height="8.500" fill="#04b0aa" />
        <rect x="22" width="17" height="8.500" fill="#dcdfe6" />
        <rect x="45" width="16" height="8.500" fill="#dcdfe6" />
        <path d="M2 15v32h59" stroke="#dcdfe6" strokeWidth="1.200" />
        <path d="M6 40l16-15 16 7 20-16" stroke="#4aaaf0" strokeWidth="1.200" />
      </svg>
    ),
  },
];

const settings: { name: string; on?: boolean }[] = [
  { name: '主题/颜色' },
  { name: '数据标签', on: false },
  { name: '图例', on: true },
  { name: '特殊值' },
  { name: '地图显示设置' },
  { name: '工具提示', on: true },
  { name: '标题', on: true },
  { name: '卡片设置' },
];

function VisualPanel() {
  return (
    <aside className="w-[430px] shrink-0">
      <div className="flex items-center justify-between h-[72px] mb-[3px] pl-5 pr-[21px]">
        <h2 className="text-[23px] font-bold text-[#1d232e]">可视化</h2>
        <button aria-label="收起"><Chevron className="!w-[15px] !h-[14px]" /></button>
      </div>
      <div className="flex items-center pl-5">
        <div className="relative w-[330px] h-[53px]">
          <select aria-label="图表类型" className="appearance-none w-full h-full pl-[51px] border border-[#d0d3da] rounded-[3px] bg-white">
            <option>指标与进度</option>
          </select>
          <span className="absolute left-[17px] top-0 flex items-baseline leading-[53px] font-bold text-[#1b837d] text-[17px] pointer-events-none">
            1<span className="text-sm">23</span>
          </span>
          <Chevron className="absolute right-5 top-[18px] pointer-events-none" />
        </div>
        <button aria-label="搜索图表" className="ml-[23px]"><Search size={26} strokeWidth={1.4} /></button>
      </div>
      <div className="grid grid-cols-[122px_122px_122px] gap-x-[13px] gap-y-2 pt-[10px] pl-5 pb-2">
        {tiles.map((tile) => (
          <button key={tile.name} className="block text-center">
            <span className="flex items-center justify-center h-[76px] mb-1 border border-[#dcdfe4] rounded-[3px]">{tile.icon}</span>
            <span className="block h-[34px] leading-[28px]">{tile.name}</span>
          </button>
        ))}
      </div>
      <div className="flex gap-8 pl-[17px] ml-[3px] border-t border-[#dfe2e6]">
        <button className="w-[119px] h-[60px] -ml-[3px] border-b-[5px] border-[#1b837d] pt-[6px] text-[#1b837d]">图表属性</button>
        <button className="w-[119px] h-[60px] border-b-[5px] border-transparent pt-[6px]">高级设置</button>
      </div>
      {settings.map(({ name, on }) => (
        <div key={name} className="flex items-center h-[67px] ml-[3px] pl-5 pr-[13px] border-b border-[#dfe2e6]">
          <button className="flex flex-1 items-center gap-[14px]">
            <svg viewBox="0 0 10 16" className="w-[10px] h-4" fill="none" stroke="currentColor" strokeWidth="1.600">
              <path d="M1.500 1.500L8.500 8l-7 6.500" />
            </svg>
            {name}
          </button>
          {on !== undefined && <Toggle label={name} on={on} />}
        </div>
      ))}
    </aside>
  );
}

function AlignIcon({ d }: { d: string }) {
  return (
    <svg viewBox="0 0 18 16" className="w-[18px] h-4" stroke="currentColor" strokeWidth="1.600">
      <path d={d} />
    </svg>
  );
}

const segment = 'flex-1 flex items-center justify-center border border-l-0 border-[#d5d9e1] last:rounded-r-[3px]';
const segmentOn = 'flex-1 flex items-center justify-center border border-[#1b837d] rounded-l-[3px] bg-[#ecf3f3] text-[#1b837d]';

function StyleDialog() {
  const [title, setTitle] = useState('国家数值分布');
  return (
    <div role="dialog" aria-label="样式" className="absolute left-[556px] top-[214px] w-[578px] bg-white shadow-[0_4px_20px_rgba(0,0,0,0.18)]">
      <div className="relative flex items-center justify-between h-[63px] pl-[23px] pr-5 border-b border-[#e2e4ee]">
        <span className="absolute left-1/2 top-[9px] -translate-x-1/2 w-[34px] h-[6px] border-y border-[#cdd1da]" />
        <h2 className="text-[23px] font-bold text-[#343a46]">样式</h2>
        <button aria-label="关闭"><X size={26} strokeWidth={1.3} /></button>
      </div>
      <div className="flex flex-col gap-5 px-5 pt-[22px] pb-[22px]">
        <label htmlFor="title-text" className="leading-[30px]">标题</label>
        <div className="relative h-11">
          <input
            id="title-text"
            value={title}
            onChange={(e) => setTitle(e.target.value)}
            className="w-full h-full pl-2 pr-10 border border-[#d0d3e0] rounded-[3px]"
          />
          <svg viewBox="0 0 24 24" className="absolute right-[10px] top-[10px] w-6 h-6" fill="none" stroke="currentColor" strokeWidth="1.500">
            <path d="M1.500 9v11h11M9 16l4 4-4 4" />
            <text x="7" y="13" fontSize="14" fill="currentColor" stroke="none">AI</text>
          </svg>
          <span className="absolute -left-[6px] -right-[11px] -top-[13px] -bottom-2 border-[3px] border-[#ec1c24] pointer-events-none" />
        </div>
        <button className="flex items-center self-end gap-[2px] -mt-[9px] h-[30px] text-[#1b837d]">
          <Plus size={28} strokeWidth={2.2} />
          筛选条件
        </button>
        <div className="flex gap-[10px] h-[42px]">
          <SelectBox label="字体" options={['sans-serif']} className="w-[264px]" />
          <SelectBox label="字号" options={['14']} className="flex-1" />
          <ColorBox label="标题颜色" color="#343c4f" className="w-[127px] h-full" />
        </div>
        <div className="flex gap-[10px] h-11">
          <div className="flex flex-1">
            <button className={segmentOn}>B</button>
            <button aria-label="斜体" className={segment}>
              <svg viewBox="0 0 14 16" className="w-[14px] h-4" fill="none" stroke="currentColor" strokeWidth="1.600">
                <path d="M5 1h8M1 15h8M9 1L5 15" />
              </svg>
            </button>
            <button aria-label="下划线" className={segment}>
              <svg viewBox="0 0 14 16" className="w-[14px] h-4" fill="none" stroke="currentColor" strokeWidth="1.600">
                <path d="M3 0v7a4 4 0 0 0 8 0V0M1 15h12" />
              </svg>
            </button>
          </div>
          <div className="flex flex-1">
            <button aria-label="左对齐" className={segmentOn}><AlignIcon d="M1 1.500h11M1 6h16M1 10.500h11M1 15h16" /></button>
            <button aria-label="居中" className={segment}><AlignIcon d="M1 1.500h16M4 6h10M1 10.500h16M4 15h10" /></button>
            <button aria-label="右对齐" className={segment}><AlignIcon d="M6 1.500h11M1 6h16M6 10.500h11M1 15h16" /></button>
          </div>
        </div>
        <div className="h-[33px] leading-[34px]">标题背景</div>
        <div className="flex items-center justify-between h-[46px]">
          <span>背景色</span>
          <ColorBox label="背景色" color="#ffffff" className="w-[165px] h-full" />
        </div>
        <div className="flex items-center h-10">
          <CheckRow id="bg-image" label="背景图片" on={false} />
          <button aria-label="选择背景图片" className="flex items-center justify-center w-[165px] h-full border border-[#dde0e7]">
            <Image size={32} strokeWidth={1.6} />
          </button>
        </div>
        <div className="flex items-center h-10">
          <CheckRow id="icon-image" label="icon图" on />
          <button aria-label="选择图标" className="flex items-center justify-center w-[165px] h-full border border-[#dde0e7]">
            <BubblesIcon id="rowBubbles" className="w-[38px] h-[38px]" />
          </button>
        </div>
        <div className="flex items-center justify-between h-[42px]">
          <label htmlFor="title-height">标题区域高度</label>
          <span className="flex items-center gap-2 w-[165px] h-full">
            <input id="title-height" defaultValue="48" className="flex-1 min-w-0 h-full px-3 border border-[#d5d9e1] rounded-[3px]" />
            px
          </span>
        </div>
        <div className="flex items-center h-11">
          <CheckRow id="border-top" label="顶部边框" on />
          <SelectBox label="顶部边框宽度" options={['4']} className="w-[83px] h-[42px]" />
          <span className="ml-2 mr-[13px]">px</span>
          <ColorBox label="顶部边框颜色" color="#57a39f" className="w-[165px] h-full" />
        </div>
        <div className="flex items-center h-[46px]">
          <CheckRow id="border-bottom" label="底部边框" on={false} />
          <SelectBox label="底部边框宽度" options={['2']} className="w-[83px] h-[42px]" />
          <span className="ml-2 mr-[13px]">px</span>
          <ColorBox label="底部边框颜色" color="#525e71" className="w-[165px] h-full" />
        </div>
      </div>
    </div>
  );
}

export default function App() {
  return (
    <div className="flex min-h-screen pl-[5px] pr-[3px] pb-1 bg-[#f6f6f7] font-['Noto_Sans','Noto_Sans_CJK_SC',sans-serif] text-[20px] leading-[30px] text-[#343a46]">
      <div className="relative flex flex-col flex-1 min-w-0 bg-white border border-t-0 border-[#dcdee2] rounded-b-[14px]">
        <Header />
        <div className="flex flex-1 mb-1">
          <DatasetPanel />
          <DrawPanel />
          <Canvas />
          <VisualPanel />
        </div>
        <StyleDialog />
      </div>
    </div>
  );
}
